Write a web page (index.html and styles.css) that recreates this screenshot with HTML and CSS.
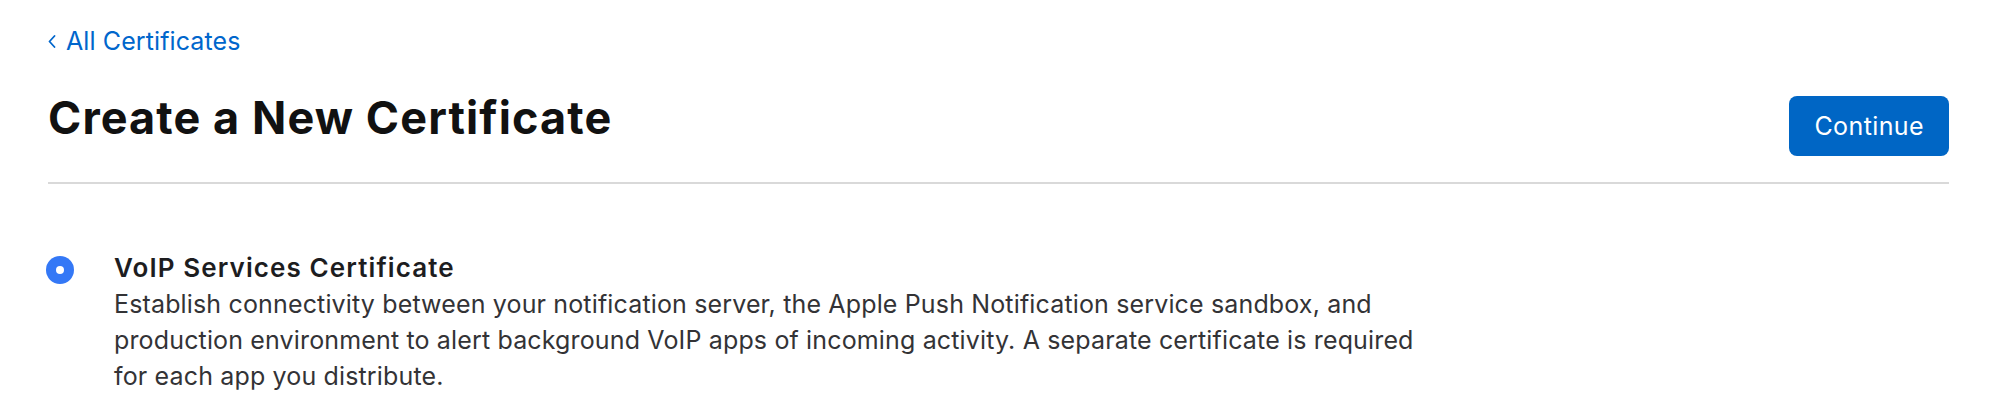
FILE: index.html
```html
<!DOCTYPE html>
<html lang="en">
<head>
<meta charset="utf-8">
<title>Create a New Certificate</title>
<link rel="stylesheet" href="styles.css">
</head>
<body>
<main class="page">
  <a class="back-link" href="#">
    <svg class="back-chevron" width="8" height="13" viewBox="0 0 8 13" aria-hidden="true">
      <polyline points="6.5,1 1.5,6.5 6.5,12" fill="none" stroke="currentColor" stroke-width="1.8" stroke-linecap="round" stroke-linejoin="round"/>
    </svg>
    <span>All Certificates</span>
  </a>
  <header class="page-header">
    <h1 class="page-title">Create a New Certificate</h1>
    <button class="btn-primary" type="button">Continue</button>
  </header>
  <section class="options">
    <label class="option">
      <span class="radio" aria-hidden="true"><span class="radio-dot"></span></span>
      <span class="option-text">
        <span class="option-title">VoIP Services Certificate</span>
        <span class="option-desc">Establish connectivity between your notification server, the Apple Push Notification service sandbox, and production environment to alert background VoIP apps of incoming activity. A separate certificate is required for each app you distribute.</span>
      </span>
    </label>
  </section>
</main>
</body>
</html>
```
FILE: styles.css
```css
* { box-sizing: border-box; }

html, body {
  margin: 0;
  background: #ffffff;
}

body {
  font-family: Inter, "Noto Sans", "Liberation Sans", sans-serif;
  color: #1d1d1f;
  -webkit-font-smoothing: antialiased;
}

.page {
  padding: 26px 45px 0 48px;
}

.back-link {
  display: inline-flex;
  align-items: center;
  gap: 10px;
  color: #0066cc;
  text-decoration: none;
  font-size: 25px;
  line-height: 30px;
  letter-spacing: 0.1px;
}

.back-chevron {
  display: block;
  margin-top: 1px;
}

.page-header {
  display: flex;
  justify-content: space-between;
  align-items: flex-start;
  margin-top: 36px;
  padding-bottom: 26px;
  border-bottom: 2px solid #d9d9d9;
}

.page-title {
  margin: 0;
  font-size: 45px;
  line-height: 52px;
  font-weight: 700;
  letter-spacing: 1.1px;
  color: #111111;
}

.btn-primary {
  margin-top: 4px;
  height: 60px;
  padding: 0 25px;
  border: 0;
  border-radius: 8px;
  background: #0066c5;
  color: #ffffff;
  font-family: inherit;
  font-size: 25px;
  line-height: 58px;
  letter-spacing: 0.4px;
}

.options {
  padding-top: 66px;
}

.option {
  display: flex;
  align-items: flex-start;
  gap: 40px;
}

.radio {
  flex: none;
  width: 28px;
  height: 28px;
  margin: 6px 0 0 -2px;
  border-radius: 50%;
  background: #3478f6;
  display: flex;
  align-items: center;
  justify-content: center;
}

.radio-dot {
  width: 8px;
  height: 8px;
  border-radius: 50%;
  background: #ffffff;
}

.option-text {
  display: flex;
  flex-direction: column;
  max-width: 1320px;
}

.option-title {
  font-size: 26px;
  line-height: 36px;
  font-weight: 600;
  letter-spacing: 1.1px;
  color: #1d1d1f;
}

.option-desc {
  font-size: 25px;
  line-height: 36px;
  font-weight: 400;
  letter-spacing: 0.15px;
  color: #333336;
}
```
